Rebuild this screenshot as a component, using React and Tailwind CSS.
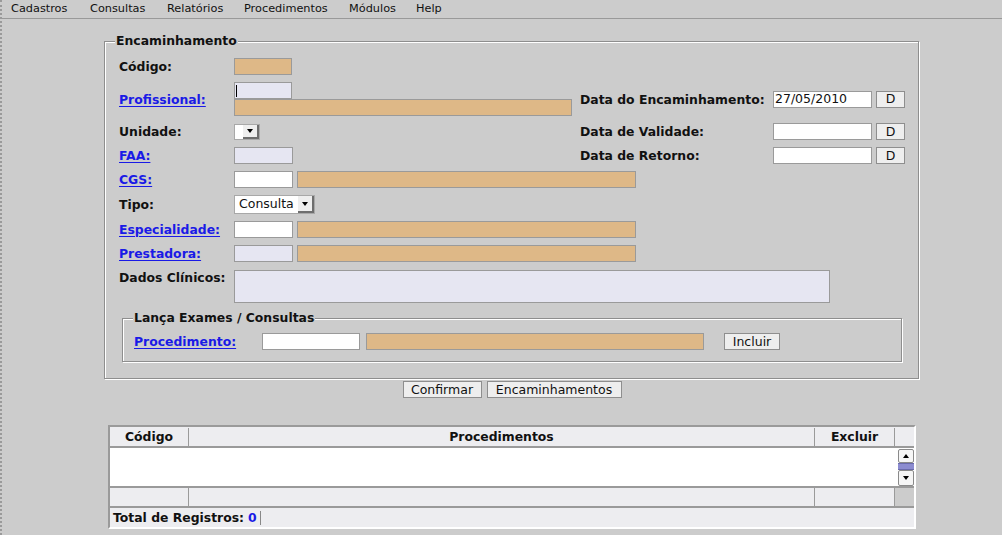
const tan = 'bg-[#deb887]'
const lav = 'bg-[#e6e6f2]'

function Box({ className = '', children }) {
  return <div className={`h-[17px] border border-[#9a9a9a] ${className}`}>{children}</div>
}

function Label({ children, link, className = '' }) {
  return (
    <span className={`text-[12.4px] font-bold leading-[15px] ${link ? 'text-[#1a1ae6] underline underline-offset-2' : 'text-[#111]'} ${className}`}>
      {children}
    </span>
  )
}

function Arrow({ up }) {
  return up ? (
    <div className="w-0 h-0 border-l-[3.5px] border-r-[3.5px] border-b-[4px] border-l-transparent border-r-transparent border-b-black" />
  ) : (
    <div className="w-0 h-0 border-l-[3.5px] border-r-[3.5px] border-t-[4px] border-l-transparent border-r-transparent border-t-black" />
  )
}

function Combo({ text, className = '' }) {
  return (
    <div className={`flex bg-white border border-[#a8a8a8] ${className}`}>
      <span className="flex-1 text-[12.5px] leading-none pl-[4px] self-center">{text}</span>
      <div className="w-[16px] h-full bg-[#eeeeee] border-r-2 border-b-2 border-[#6e6e6e] flex items-center justify-center">
        <Arrow />
      </div>
    </div>
  )
}

function Btn({ children, className = '' }) {
  return (
    <button className={`h-[17px] bg-[#eeeeee] border border-[#8e8e8e] text-[12.5px] leading-none text-[#111] flex items-center justify-center pt-[1px] ${className}`}>
      {children}
    </button>
  )
}

function DateField({ label, value }) {
  return (
    <div className="flex items-center">
      <Label className="w-[193px]">{label}</Label>
      <Box className="w-[99px] bg-white flex items-center">
        <span className="text-[12.5px] leading-none pl-[1px] pt-[1px]">{value}</span>
      </Box>
      <Btn className="ml-[4px] w-[29px]">D</Btn>
    </div>
  )
}

export default function App() {
  return (
    <div className="relative w-[1002px] h-[535px] bg-[#cccccc] overflow-hidden font-['DejaVu_Sans',sans-serif] text-[#111]">
      <div className="absolute left-0 top-0 h-full w-[2px] border-l-2 border-dotted border-[#9a9a9a]" />

      {/* menu */}
      <div className="h-[19px] border-b border-[#999] flex items-center pl-[11px] pt-[1px] text-[11.3px]">
        <span className="w-[79px]">Cadastros</span>
        <span className="w-[77px]">Consultas</span>
        <span className="w-[77px]">Relatórios</span>
        <span className="w-[105px]">Procedimentos</span>
        <span className="w-[67px]">Módulos</span>
        <span>Help</span>
      </div>

      {/* Encaminhamento */}
      <div className="relative ml-[104px] mt-[22px] w-[815px] h-[338px] border border-[#8e8e8e] shadow-[inset_1px_1px_0_#fff,1px_1px_0_#fff]">
        <span className="absolute left-[10px] -top-[9px] px-[1px] bg-[#cccccc] text-[12.4px] font-bold leading-[15px]">Encaminhamento</span>

        <div className="flex flex-col pl-[14px]">
          <div className="mt-[16px] h-[17px] flex items-center">
            <Label className="w-[115px]">Código:</Label>
            <Box className={`w-[58px] ${tan}`} />
          </div>

          <div className="mt-[7px] h-[34px] flex items-center">
            <div className="w-[461px] flex items-center">
              <Label link className="w-[115px]">Profissional:</Label>
              <div className="flex flex-col w-[338px]">
                <Box className={`w-[58px] ${lav} flex items-center`}>
                  <div className="ml-[1px] w-[1px] h-[12px] bg-black" />
                </Box>
                <Box className={`w-[338px] ${tan}`} />
              </div>
            </div>
            <DateField label="Data do Encaminhamento:" value="27/05/2010" />
          </div>

          <div className="mt-[7px] h-[17px] flex items-center">
            <div className="w-[461px] flex items-center">
              <Label className="w-[115px]">Unidade:</Label>
              <Combo className="w-[26px] h-[16px]" />
            </div>
            <DateField label="Data de Validade:" />
          </div>

          <div className="mt-[7px] h-[17px] flex items-center">
            <div className="w-[461px] flex items-center">
              <Label link className="w-[115px]">FAA:</Label>
              <Box className={`w-[59px] ${lav}`} />
            </div>
            <DateField label="Data de Retorno:" />
          </div>

          <div className="mt-[7px] h-[17px] flex items-center">
            <Label link className="w-[115px]">CGS:</Label>
            <Box className="w-[59px] bg-white" />
            <Box className={`ml-[4px] w-[339px] ${tan}`} />
          </div>

          <div className="mt-[7px] h-[19px] flex items-center">
            <Label className="w-[115px]">Tipo:</Label>
            <Combo text="Consulta" className="w-[81px] h-[19px]" />
          </div>

          <div className="mt-[7px] h-[17px] flex items-center">
            <Label link className="w-[115px]">Especialidade:</Label>
            <Box className="w-[59px] bg-white" />
            <Box className={`ml-[4px] w-[339px] ${tan}`} />
          </div>

          <div className="mt-[7px] h-[17px] flex items-center">
            <Label link className="w-[115px]">Prestadora:</Label>
            <Box className={`w-[59px] ${lav}`} />
            <Box className={`ml-[4px] w-[339px] ${tan}`} />
          </div>

          <div className="mt-[8px] h-[33px] flex items-start">
            <Label className="w-[115px]">Dados Clínicos:</Label>
            <div className={`w-[596px] h-[33px] border border-[#9a9a9a] ${lav}`} />
          </div>
        </div>

        {/* Lança Exames */}
        <div className="relative ml-[17px] mt-[15px] w-[780px] h-[44px] border border-[#8e8e8e] shadow-[inset_1px_1px_0_#fff,1px_1px_0_#fff]">
          <span className="absolute left-[10px] -top-[9px] px-[1px] bg-[#cccccc] text-[12.4px] font-bold leading-[15px]">Lança Exames / Consultas</span>
          <div className="mt-[14px] h-[17px] flex items-center pl-[11px]">
            <Label link className="w-[128px]">Procedimento:</Label>
            <Box className="w-[98px] bg-white" />
            <Box className={`ml-[6px] w-[338px] ${tan}`} />
            <Btn className="ml-[20px] w-[56px] h-[16px]">Incluir</Btn>
          </div>
        </div>
      </div>

      <div className="ml-[104px] mt-[2px] w-[816px] flex justify-center gap-[5px]">
        <Btn className="w-[79px] pt-[2px]">Confirmar</Btn>
        <Btn className="w-[135px] pt-[2px]">Encaminhamentos</Btn>
      </div>

      {/* table */}
      <div className="ml-[108px] mt-[27px] w-[808px] border-t-2 border-l-2 border-r-2 border-b-2 border-t-[#9a9a9a] border-l-[#9a9a9a] border-r-white border-b-white">
        <div className="flex h-[21px] bg-[#ededf0] border-b-2 border-[#9a9a9a] text-[12.4px] font-bold pt-[1px]">
          <div className="w-[79px] border-r border-[#9a9a9a] flex items-center justify-center">Código</div>
          <div className="w-[626px] border-r border-[#9a9a9a] flex items-center justify-center">Procedimentos</div>
          <div className="w-[80px] border-r border-[#9a9a9a] flex items-center justify-center">Excluir</div>
          <div className="w-[19px]" />
        </div>
        <div className="h-[40px] bg-white border-b-2 border-[#9a9a9a] flex justify-end">
          <div className="w-[16px] mt-[1px] flex flex-col">
            <div className="h-[14px] bg-[#f6f6f6] border border-[#8a8a8a] rounded-[2px] flex items-center justify-center"><Arrow up /></div>
            <div className="h-[7px] bg-[#8c8cd0] border-y border-[#6a6aaa]" />
            <div className="h-[16px] bg-[#f6f6f6] border border-[#8a8a8a] rounded-[2px] flex items-center justify-center"><Arrow /></div>
          </div>
        </div>
        <div className="flex h-[20px] bg-[#ededf0] border-b-2 border-[#9a9a9a]">
          <div className="w-[79px] border-r border-[#9a9a9a]" />
          <div className="w-[626px] border-r border-[#9a9a9a]" />
          <div className="w-[80px] border-r border-[#9a9a9a]" />
          <div className="w-[19px] bg-[#cccccc]" />
        </div>
        <div className="h-[19px] bg-[#ededf0] flex items-center pl-[3px] pt-[1px] text-[12.4px] font-bold">
          <span>Total de Registros:</span>
          <span className="ml-[4px] text-[#1a1ae6]">0</span>
          <div className="ml-[3px] w-[1px] h-[14px] bg-[#888]" />
        </div>
      </div>
    </div>
  )
}
